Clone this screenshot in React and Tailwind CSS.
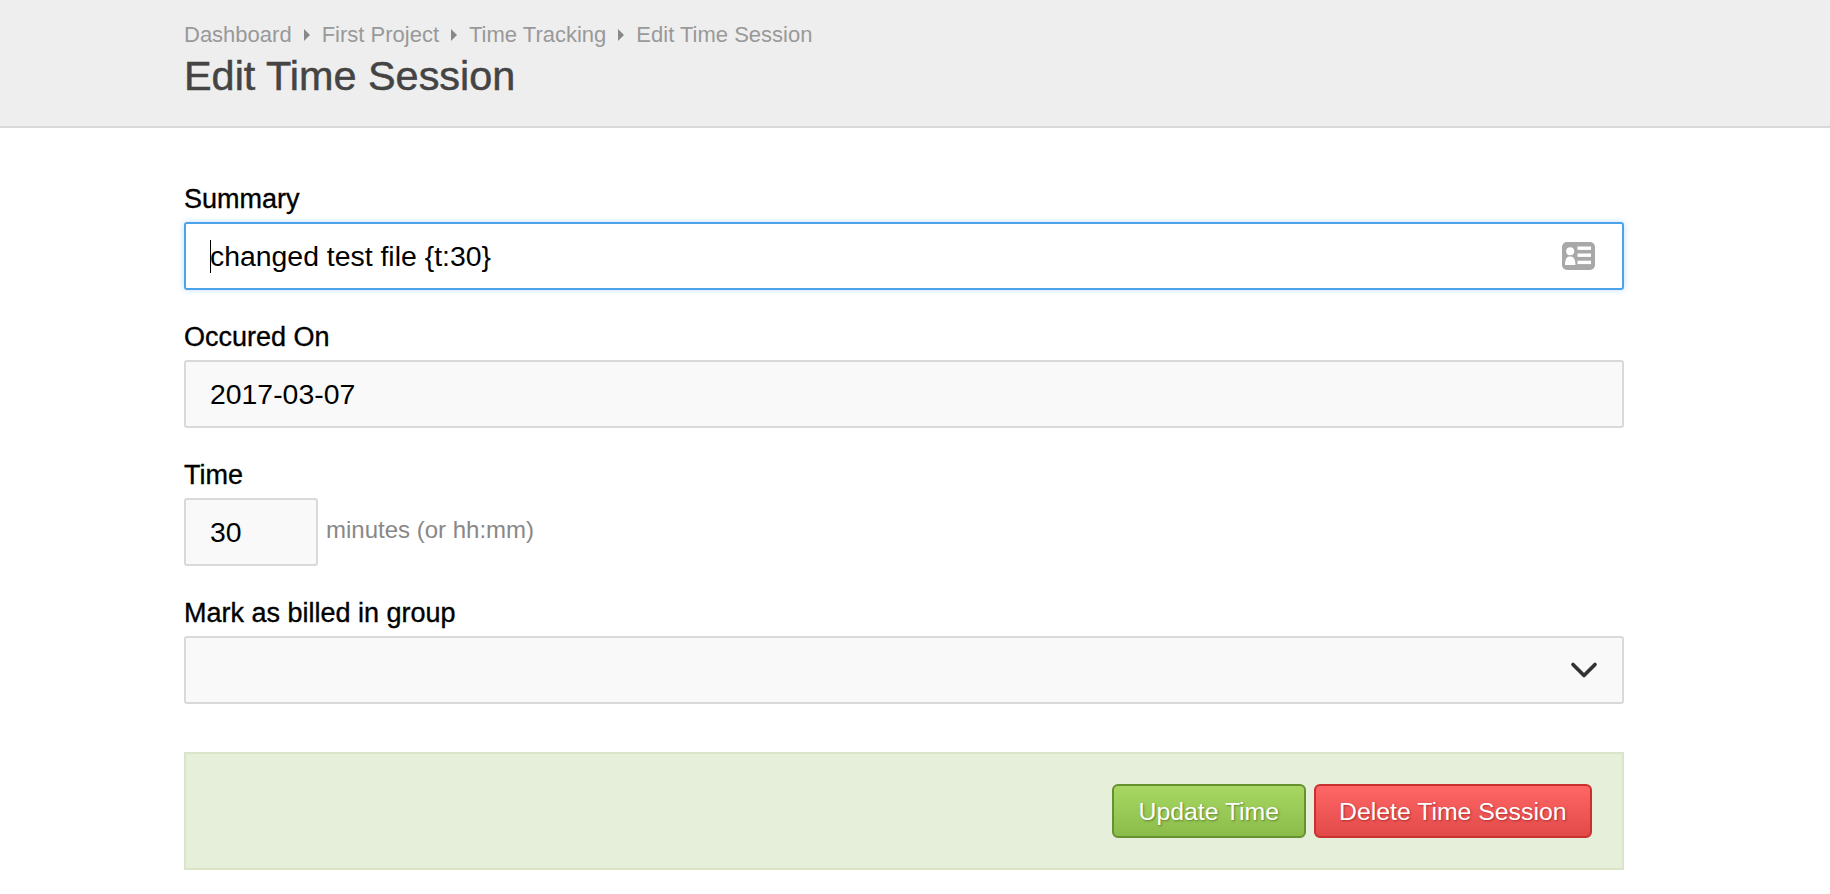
import React from "react";
import { ChevronDown } from "lucide-react";

const crumbs = ["Dashboard", "First Project", "Time Tracking", "Edit Time Session"];

function ContactIcon() {
  return (
    <svg width="33" height="28" viewBox="0 0 33 28" className="block">
      <rect x="0" y="0" width="33" height="28" rx="5" fill="#a8a8a8" />
      <circle cx="8.2" cy="9.3" r="4" fill="#fff" />
      <path d="M3 23 C3 17 4.8 14.5 8.2 14.5 C11.6 14.5 13.4 17 13.4 23 Z" fill="#fff" />
      <rect x="15.5" y="4.5" width="13.5" height="3.4" fill="#fff" />
      <rect x="15.5" y="11.5" width="13.5" height="3.4" fill="#fff" />
      <rect x="15.5" y="18.7" width="13.5" height="3.4" fill="#fff" />
    </svg>
  );
}

function Field({ label, children }) {
  return (
    <div className="mb-[30px]">
      <label className="block h-[40px] text-[27px] leading-[34px] text-black [-webkit-text-stroke:0.35px_#000]">
        {label}
      </label>
      {children}
    </div>
  );
}

const plainInput =
  "block h-[68px] rounded-[3px] border-2 border-[#d9d9d9] bg-[#f9f9f9] px-[24px] text-[28.4px] text-black outline-none";

export default function App() {
  return (
    <div className="min-h-[894px] bg-white font-['Liberation_Sans',Arial,sans-serif]">
      {/* Page header */}
      <div className="h-[128px] border-b-2 border-[#d8d8d8] bg-[#eeeeee] px-[184px] pt-[21px]">
        <div className="flex items-center text-[22px] leading-[28px] text-[#999999]">
          {crumbs.map((crumb, index) => (
            <React.Fragment key={crumb}>
              {index > 0 && (
                <span className="mx-[12px] h-0 w-0 border-y-[6px] border-l-[6px] border-y-transparent border-l-[#888888]"></span>
              )}
              <span>{crumb}</span>
            </React.Fragment>
          ))}
        </div>
        <h1 className="mt-[2px] text-[41.4px] leading-[50px] text-[#444444] [-webkit-text-stroke:0.5px_#444444]">
          Edit Time Session
        </h1>
      </div>

      {/* Form */}
      <div className="w-[1624px] pl-[184px] pt-[54px]">
        <Field label="Summary">
          <div className="relative">
            <input
              readOnly
              value="changed test file {t:30}"
              className="block h-[68px] w-full rounded-[3px] border-2 border-[#4ba3ea] bg-white px-[24px] text-[28.4px] text-black shadow-[0_0_6px_rgba(75,163,234,0.35)] outline-none"
            />
            <span className="absolute left-[26px] top-[18px] h-[33px] w-px bg-black"></span>
            <span className="absolute right-[29px] top-[20px]">
              <ContactIcon />
            </span>
          </div>
        </Field>

        <Field label="Occured On">
          <input readOnly value="2017-03-07" className={`${plainInput} w-full`} />
        </Field>

        <Field label="Time">
          <div className="flex items-center">
            <input readOnly value="30" className={`${plainInput} w-[134px]`} />
            <span className="ml-[8px] pb-[4px] text-[24px] text-[#888888]">minutes (or hh:mm)</span>
          </div>
        </Field>

        <Field label="Mark as billed in group">
          <div className="relative">
            <select className={`${plainInput} w-full appearance-none`}></select>
            <ChevronDown
              size={44}
              strokeWidth={2}
              className="pointer-events-none absolute right-[18px] top-[12px] text-[#333333]"
            />
          </div>
        </Field>

        {/* Actions */}
        <div className="mt-[48px] flex h-[118px] justify-end gap-[8px] border-2 border-[#d9e4c9] bg-[#e6efd9] pr-[30px] pt-[30px]">
          <button className="h-[54px] rounded-[6px] border-2 border-[#67902f] bg-gradient-to-b from-[#a8d863] to-[#8bbb4a] px-[24.5px] pt-[2px] text-[24.8px] text-white [text-shadow:1px_1px_2px_rgba(60,90,20,0.6)]">
            Update Time
          </button>
          <button className="h-[54px] rounded-[6px] border-2 border-[#c9302f] bg-gradient-to-b from-[#ff6666] to-[#e24a4a] px-[23.5px] pt-[2px] text-[24.8px] text-white [text-shadow:1px_1px_2px_rgba(130,20,20,0.6)]">
            Delete Time Session
          </button>
        </div>
      </div>
    </div>
  );
}
